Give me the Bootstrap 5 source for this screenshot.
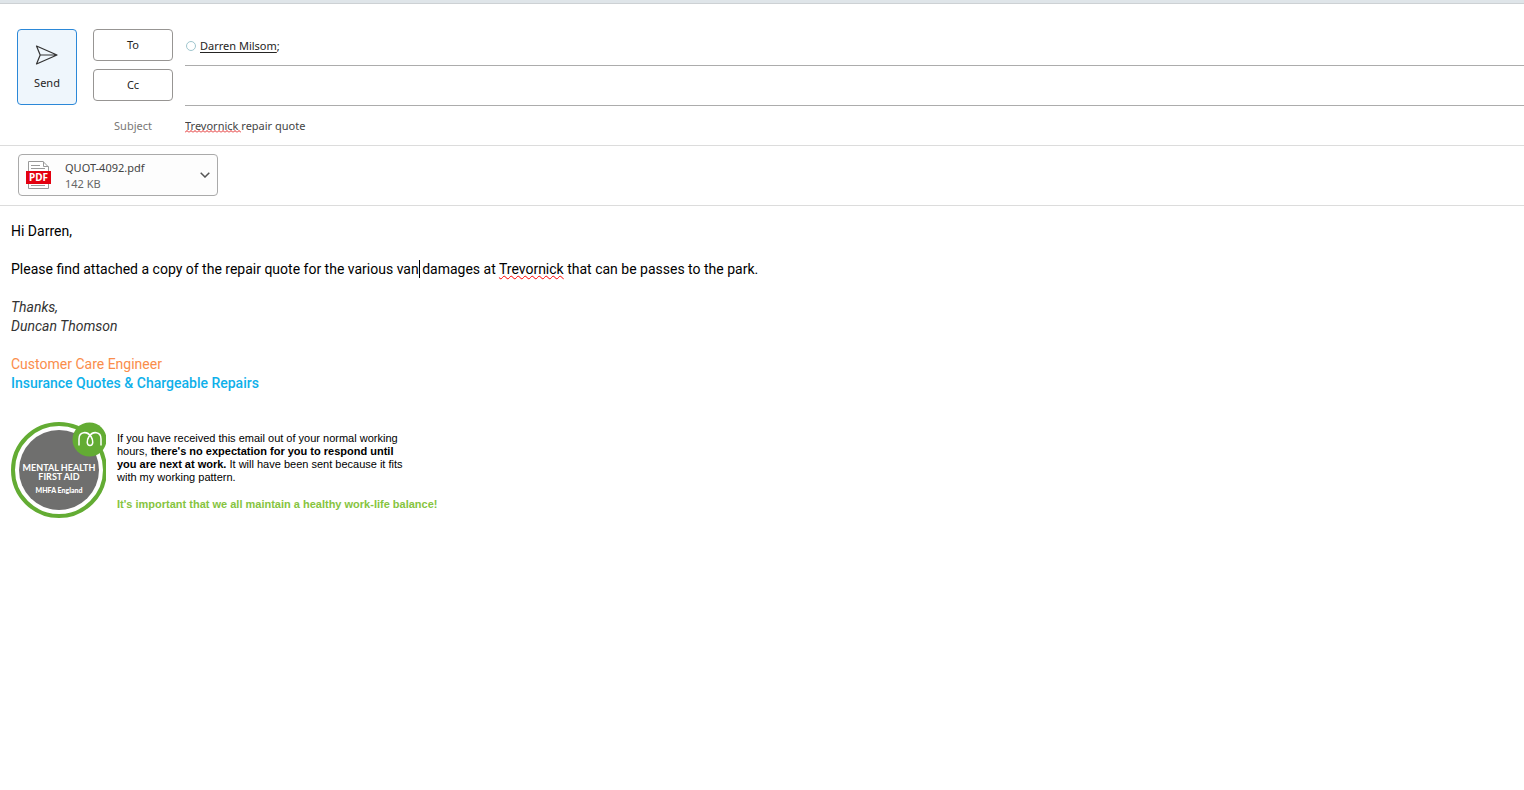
<!DOCTYPE html>
<html lang="en">
<head>
<meta charset="utf-8">
<meta name="viewport" content="width=device-width, initial-scale=1">
<title>Trevornick repair quote</title>
<link href="https://cdn.jsdelivr.net/npm/bootstrap@5.3.0/dist/css/bootstrap.min.css" rel="stylesheet">
<style>
  body { font: 11px/16px "Noto Sans", "Open Sans", sans-serif; color: #252423; background: #fff; }
  .window-edge { height: 4px; background: #dfe5e9; border-bottom: 1px solid #cdd1d4; }
  .compose-head { padding: 22px 0 0 17px; border-bottom: 1px solid #dcdcdc; }
  .compose-head .btn, .attach-bar .btn { font-size: 11px; line-height: 16px; }
  .compose-head .btn { color: #252423; }
  .send-btn { width: 60px; height: 76px; margin-top: 3px; background: #eff6fc; border: 1px solid #2b88d8; border-radius: 4px; }
  .field-row { display: grid; grid-template-columns: 80px 1fr; column-gap: 12px; height: 40px; }
  .field-row:last-child { height: 39px; }
  .pick-btn { height: 32px; margin-top: 3px; background: #fff; border: 1px solid #979593; border-radius: 4px; }
  .field-row input { border: 0; outline: 0; padding: 0; min-width: 0; background: transparent; color: #444; }
  .field-row .line-field { border-bottom: 1px solid #acacac; }
  .presence { width: 10px; height: 10px; border: 1px solid #9fc6ce; border-radius: 50%; margin: 0 4px 0 1px; }
  .recipient { color: #252423; text-underline-offset: 2px; }
  .subject-label { color: #797775; }
  .squiggle { left: 0; top: 24px; width: 56px; height: 3px; }
  .attach-bar { padding: 8px 18px 9px; border-bottom: 1px solid #dcdcdc; }
  .attach-bar .attach-card { width: 200px; height: 42px; padding: 0 7px; background: #fdfdfd; border: 1px solid #aaa; border-radius: 4px; color: #444; text-align: left; }
  .file-text { margin-left: 13px; padding-top: 1px; }
  .file-size { color: #666; }
  .mail-body { padding: 16px 11px; font: 14px/19px Roboto, Inter, sans-serif; color: #000; outline: 0; }
  .mail-body p { margin: 0 0 19px; }
  .misspelt { text-decoration: underline wavy #f00 1px; text-underline-offset: 1px; text-decoration-skip-ink: none; }
  .caret { display: inline-block; width: 1px; height: 18px; margin: 0 -1px 0 0; background: #000; vertical-align: -4px; }
  .closing { color: #333; font-style: italic; }
  .role { color: #fa8d4b; }
  .dept { color: #0eb0ea; font-weight: 500; }
  .signature { column-gap: 11px; padding-top: 8px; }
  .notice { max-width: 290px; font: 11px/13px "Liberation Sans", Arial, sans-serif; }
  .balance { color: #86c440; font: bold 11px/13px "Liberation Sans", Arial, sans-serif; }
  .mail-body .notice { margin: 12px 0 14px; }
</style>
</head>
<body>
<div class="window-edge"></div>
<form class="compose-head d-flex" onsubmit="return false">
  <button type="submit" class="btn send-btn d-flex flex-column align-items-center justify-content-center p-0 me-3 flex-shrink-0">
    <svg class="mb-2" width="24" height="24" viewBox="0 0 24 24" fill="none" stroke="#333" stroke-width="1.2" stroke-linejoin="round" aria-hidden="true"><path d="M1.500 3 22 12 1.500 21 5.200 12ZM5.200 12H22"/></svg>
    <span>Send</span>
  </button>
  <div class="flex-grow-1">
    <div class="field-row">
      <button type="button" class="btn pick-btn p-0">To</button>
      <div class="line-field d-flex align-items-center">
        <span class="presence"></span><a href="#" class="recipient">Darren Milsom</a>;
        <input class="flex-grow-1" type="text" aria-label="To">
      </div>
    </div>
    <div class="field-row">
      <button type="button" class="btn pick-btn p-0">Cc</button>
      <input class="line-field" type="text" aria-label="Cc">
    </div>
    <div class="field-row">
      <label for="subject" class="subject-label text-center align-self-center">Subject</label>
      <div class="position-relative d-flex">
        <input id="subject" class="flex-grow-1" type="text" value="Trevornick repair quote" spellcheck="false">
        <svg class="squiggle position-absolute" aria-hidden="true"><defs><pattern id="zig" width="4" height="3" patternUnits="userSpaceOnUse"><path d="M0 2.500 2 .5 4 2.500" fill="none" stroke="#e02020"/></pattern></defs><rect width="100%" height="3" fill="url(#zig)"/></svg>
      </div>
    </div>
  </div>
</form>
<div class="attach-bar">
  <button type="button" class="btn attach-card d-flex align-items-center">
    <svg width="26" height="30" viewBox="0 0 26 30" aria-hidden="true">
      <path d="M2.500 1.500H17L22.500 7V28.500H2.500Z" fill="#fff" stroke="#999"/>
      <path d="M17.500 1.500V6.500H22.500M5 5.500H14M5 8.500H19M5 25.500H19" fill="none" stroke="#999"/>
      <rect y="11" width="25" height="13" fill="#e3000f"/>
      <text x="12.500" y="21" text-anchor="middle" font-family="Noto Sans, sans-serif" font-size="10" font-weight="700" fill="#fff">PDF</text>
    </svg>
    <span class="d-flex flex-column flex-grow-1 file-text"><span>QUOT-4092.pdf</span><span class="file-size">142 KB</span></span>
    <svg width="10" height="6" viewBox="0 0 10 6" fill="none" stroke="#555" stroke-width="1.500" aria-hidden="true"><path d="M.7.7 5 5 9.300.7"/></svg>
  </button>
</div>
<main class="mail-body" contenteditable="true" spellcheck="false" role="textbox" aria-label="Message">
  <p>Hi Darren,</p>
  <p>Please find attached a copy of the repair quote for the various van<span class="caret"></span> damages at <span class="misspelt">Trevornick</span> that can be passes to the park.</p>
  <p class="closing">Thanks,<br>Duncan Thomson</p>
  <p><span class="role">Customer Care Engineer</span><br><span class="dept">Insurance Quotes &amp; Chargeable Repairs</span></p>
  <div class="d-flex signature">
    <svg class="flex-shrink-0" width="95" height="98" viewBox="0 0 95 98" role="img" aria-label="Mental Health First Aid, MHFA England">
      <circle cx="48" cy="50" r="46" fill="#fff" stroke="#63ac33" stroke-width="4"/>
      <circle cx="48" cy="50" r="40" fill="#6f6f6e"/>
      <circle cx="78.500" cy="19.500" r="17" fill="#63ac33"/>
      <path d="M68 25.500V19C68 11 76.500 11 80 16.500C82.500 20.500 82.500 25.500 79 25.500C75.500 25.500 75.500 20.500 78 16.500C81.500 11 90 11 90 19V25.500" fill="none" stroke="#fff" stroke-width="1.500"/>
      <g fill="#fff" text-anchor="middle" font-family="Lato, sans-serif" font-weight="700"><text x="48" y="51" font-size="9">MENTAL HEALTH</text><text x="48" y="60" font-size="9">FIRST AID</text><text x="48" y="73" font-size="7" font-weight="900">MHFA England</text></g>
    </svg>
    <div>
      <p class="notice">If you have received this email out of your normal working hours, <b>there's no expectation for you to respond until you are next at work.</b> It will have been sent because it fits with my working pattern.</p>
      <p class="balance">It's important that we all maintain a healthy work-life balance!</p>
    </div>
  </div>
</main>
<script src="https://cdn.jsdelivr.net/npm/bootstrap@5.3.0/dist/js/bootstrap.bundle.min.js"></script>
</body>
</html>
